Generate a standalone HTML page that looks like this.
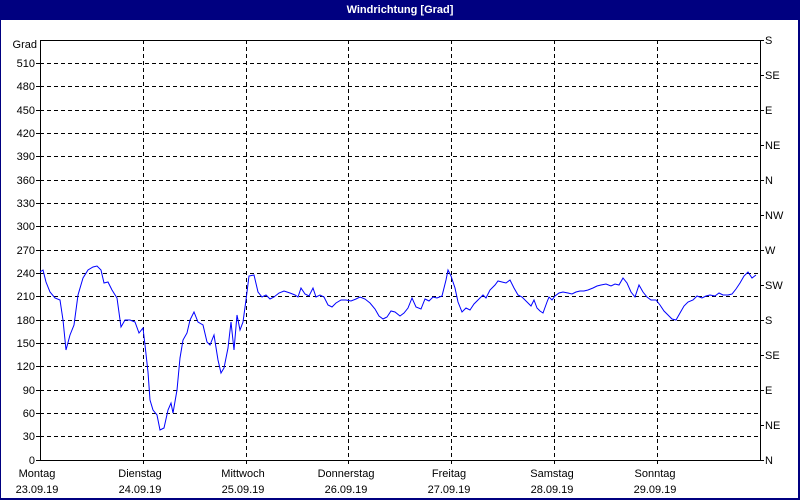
<!DOCTYPE html>
<html><head><meta charset="utf-8"><style>
html,body{margin:0;padding:0;width:800px;height:500px;overflow:hidden;background:#fff}
svg text{font-family:"Liberation Sans",sans-serif;font-size:11px;fill:#000}
</style></head><body>
<svg width="800" height="500" xmlns="http://www.w3.org/2000/svg" shape-rendering="crispEdges">
<rect x="0" y="0" width="800" height="500" fill="#000080"/>
<rect x="1" y="20" width="797" height="478" fill="#fff"/>
<text x="400" y="13" text-anchor="middle" style="fill:#fff;font-weight:bold;font-size:11px">Windrichtung [Grad]</text>
<g stroke="#000" stroke-width="1" stroke-dasharray="4,3" fill="none">
<path d="M40 63.5H760M40 86.5H760M40 110.5H760M40 133.5H760M40 156.5H760M40 180.5H760M40 203.5H760M40 226.5H760M40 250.5H760M40 273.5H760M40 296.5H760M40 320.5H760M40 343.5H760M40 366.5H760M40 390.5H760M40 413.5H760M40 436.5H760"/>
<path d="M143.5 40V460M246.5 40V460M348.5 40V460M451.5 40V460M554.5 40V460M657.5 40V460"/>
</g>
<g stroke="#000" fill="none">
<path d="M40.5 40V460.5H760.5V40.5H40"/>
<path d="M760 40.5h4M760 75.5h4M760 110.5h4M760 145.5h4M760 180.5h4M760 215.5h4M760 250.5h4M760 285.5h4M760 320.5h4M760 355.5h4M760 390.5h4M760 425.5h4M760 460.5h4"/>
<path d="M36 63.5h4M36 86.5h4M36 110.5h4M36 133.5h4M36 156.5h4M36 180.5h4M36 203.5h4M36 226.5h4M36 250.5h4M36 273.5h4M36 296.5h4M36 320.5h4M36 343.5h4M36 366.5h4M36 390.5h4M36 413.5h4M36 436.5h4M36 460.5h4"/>
<path d="M143.5 460v4M246.5 460v4M348.5 460v4M451.5 460v4M554.5 460v4M657.5 460v4"/>
</g>
<g text-anchor="end">
<text x="37" y="48">Grad</text>
<text x="35" y="67">510</text><text x="35" y="90">480</text><text x="35" y="114">450</text><text x="35" y="137">420</text><text x="35" y="160">390</text><text x="35" y="184">360</text><text x="35" y="207">330</text><text x="35" y="230">300</text><text x="35" y="254">270</text><text x="35" y="277">240</text><text x="35" y="300">210</text><text x="35" y="324">180</text><text x="35" y="347">150</text><text x="35" y="370">120</text><text x="35" y="394">90</text><text x="35" y="417">60</text><text x="35" y="440">30</text><text x="35" y="464">0</text>
</g>
<g>
<text x="765" y="44">S</text><text x="765" y="79">SE</text><text x="765" y="114">E</text><text x="765" y="149">NE</text><text x="765" y="184">N</text><text x="765" y="219">NW</text><text x="765" y="254">W</text><text x="765" y="289">SW</text><text x="765" y="324">S</text><text x="765" y="359">SE</text><text x="765" y="394">E</text><text x="765" y="429">NE</text><text x="765" y="464">N</text>
</g>
<g text-anchor="middle">
<text x="37" y="477">Montag</text><text x="37" y="493">23.09.19</text>
<text x="140" y="477">Dienstag</text><text x="140" y="493">24.09.19</text>
<text x="243" y="477">Mittwoch</text><text x="243" y="493">25.09.19</text>
<text x="346" y="477">Donnerstag</text><text x="346" y="493">26.09.19</text>
<text x="449" y="477">Freitag</text><text x="449" y="493">27.09.19</text>
<text x="552" y="477">Samstag</text><text x="552" y="493">28.09.19</text>
<text x="655" y="477">Sonntag</text><text x="655" y="493">29.09.19</text>
</g>
<polyline fill="none" stroke="#0000ff" stroke-width="1" shape-rendering="auto" points="40,272 43,270 46,282 50,292 55,298 60,300 63,320 66,350 70,335 74,325 78,295 83,278 88,270 93,267 97,266 101,270 104,283 108,282 112,290 117,298 121,327 125,320 130,320 135,322 139,333 143,328 145,345 148,372 150,400 153,410 157,415 160,430 164,428 168,410 171,403 173,413 177,390 180,358 183,340 187,333 190,320 194,312 198,322 203,325 207,342 210,345 214,335 218,360 221,373 224,368 228,348 231,322 234,350 237,315 240,330 243,322 246,300 249,276 254,275 258,292 262,297 266,295 270,299 274,297 279,293 284,291 290,293 295,295 298,297 301,288 305,294 309,296 313,288 316,297 320,295 324,297 328,305 332,307 336,303 341,300 346,300 351,301 356,299 360,297 365,299 370,303 375,309 379,316 383,319 387,317 391,311 395,312 400,316 404,313 408,308 412,298 416,307 421,309 425,299 429,301 433,297 437,298 442,296 446,280 448,270 451,276 455,288 458,302 462,312 466,308 470,310 474,304 479,299 483,295 486,298 490,290 495,285 498,281 502,282 506,283 510,280 514,288 518,295 522,297 527,302 531,306 534,300 537,308 540,311 543,313 547,302 549,297 552,300 555,296 559,293 563,292 568,293 572,294 576,292 580,291 584,291 588,290 593,288 597,286 601,285 606,284 611,286 615,284 619,285 623,278 627,283 631,292 635,297 639,285 643,292 647,297 651,300 656,300 660,305 664,311 668,315 672,319 676,320 680,313 684,306 688,302 693,300 697,296 702,298 706,296 710,295 715,296 719,293 723,295 728,295 732,294 736,289 740,283 744,276 748,272 752,278 756,275"/>
</svg>
</body></html>
